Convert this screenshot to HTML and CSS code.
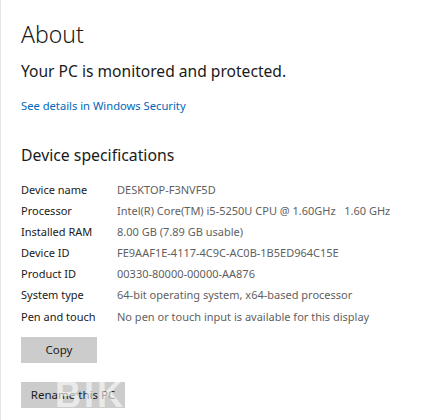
FILE: index.html
```html
<!DOCTYPE html>
<html>
<head>
<meta charset="utf-8">
<link rel="stylesheet" href="styles.css">
</head>
<body>
<div class="page">
  <h1 class="title">About</h1>
  <p class="status">Your PC is monitored and protected.</p>
  <a class="link" href="#">See details in Windows Security</a>
  <h2 class="section">Device specifications</h2>
  <div class="specs">
    <div class="label">Device name</div><div class="value">DESKTOP-F3NVF5D</div>
    <div class="label">Processor</div><div class="value">Intel(R) Core(TM) i5-5250U CPU @ 1.60GHz&nbsp;&nbsp;&nbsp;1.60 GHz</div>
    <div class="label">Installed RAM</div><div class="value">8.00 GB (7.89 GB usable)</div>
    <div class="label">Device ID</div><div class="value">FE9AAF1E-4117-4C9C-AC0B-1B5ED964C15E</div>
    <div class="label">Product ID</div><div class="value">00330-80000-00000-AA876</div>
    <div class="label">System type</div><div class="value">64-bit operating system, x64-based processor</div>
    <div class="label">Pen and touch</div><div class="value">No pen or touch input is available for this display</div>
  </div>
  <button class="btn copy">Copy</button>
  <div class="rename-wrap">
    <button class="btn rename">Rename this PC</button>
    <span class="watermark">BIK</span>
  </div>
</div>
</body>
</html>
```
FILE: styles.css
```css
html, body {
  margin: 0;
  padding: 0;
  background: #fff;
}
body {
  font-family: "Noto Sans", "Open Sans", sans-serif;
  color: #1a1a1a;
  width: 430px;
  height: 420px;
  overflow: hidden;
}
.page {
  border-left: 1px solid #e6e6e6;
  height: 420px;
  box-sizing: border-box;
  padding: 18px 0 0 20px;
  display: flex;
  flex-direction: column;
  align-items: flex-start;
}
.title {
  margin: 0;
  font-size: 23px;
  font-weight: 300;
  line-height: 32px;
  color: #1a1a1a;
}
.status {
  margin: 10px 0 0 0;
  font-size: 15.6px;
  font-weight: 400;
  line-height: 22px;
}
.link {
  margin-top: 16px;
  font-size: 11.2px;
  line-height: 16px;
  color: #0067b8;
  text-decoration: none;
}
.section {
  margin: 29px 0 0 0;
  font-size: 15.8px;
  font-weight: 400;
  line-height: 24px;
}
.specs {
  margin-top: 12px;
  display: grid;
  grid-template-columns: 96px auto;
  grid-auto-rows: 21.1px;
  font-size: 11px;
  line-height: 21px;
}
.label {
  color: #1a1a1a;
}
.value {
  color: #5f5f5f;
  white-space: nowrap;
}
.btn {
  font-family: inherit;
  font-size: 11.5px;
  color: #1a1a1a;
  background: #cccccc;
  border: none;
  padding: 0;
  height: 26px;
}
.copy {
  margin-top: 10px;
  width: 76px;
}
.rename-wrap {
  position: relative;
  margin-top: 19px;
  height: 26px;
  overflow: hidden;
}
.rename {
  width: 104px;
  display: block;
}
.watermark {
  position: absolute;
  left: 34px;
  top: -5px;
  font-family: "Liberation Sans", sans-serif;
  font-weight: 700;
  font-size: 36px;
  line-height: 1;
  color: rgba(255, 255, 255, 0.6);
  letter-spacing: 3px;
  pointer-events: none;
}
```
